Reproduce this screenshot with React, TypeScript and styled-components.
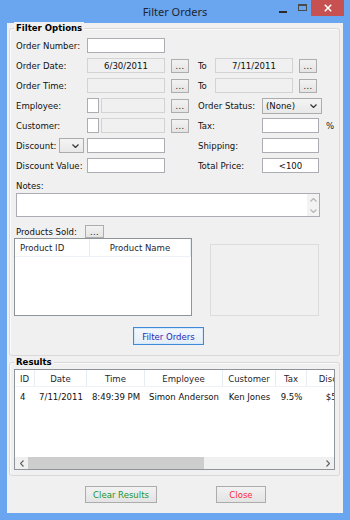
import React from 'react';
import styled, { createGlobalStyle } from 'styled-components';

const FONT = `"DejaVu Sans Condensed", "DejaVu Sans", sans-serif`;

const Global = createGlobalStyle`
  html, body { margin: 0; padding: 0; }
  body { width: 350px; height: 520px; overflow: hidden; background: #6aa6ef; }
  * { box-sizing: border-box; }
`;

const Window = styled.div`
  width: 350px;
  height: 520px;
  background: #6aa6ef;
  display: flex;
  flex-direction: column;
  font-family: ${FONT};
  font-size: 9.5px;
  color: #111;
`;

const TitleBar = styled.div`
  height: 23px;
  display: grid;
  grid-template-columns: 1fr auto 1fr;
  align-items: start;
`;

const TitleText = styled.div`
  grid-column: 2;
  font-family: "Noto Sans", sans-serif;
  font-size: 11px;
  line-height: 23px;
  color: #1e2530;
`;

const Controls = styled.div`
  grid-column: 3;
  justify-self: end;
  display: flex;
  padding-right: 6px;
`;

const CtrlButton = styled.div<{ $w: number; $bg?: string }>`
  width: ${p => p.$w}px;
  height: 16px;
  background: ${p => p.$bg ?? 'transparent'};
  display: flex;
  justify-content: center;
  align-items: flex-start;
`;

const MinGlyph = styled.div`
  width: 8px;
  height: 2px;
  margin-top: 11px;
  background: #2b2b2b;
`;

const MaxGlyph = styled.div`
  width: 9px;
  height: 7px;
  margin-top: 4px;
  border: 1px solid #4a4a4a;
  border-top-width: 2px;
`;

const Frame = styled.div`
  flex: 1;
  padding: 0 7px 7px 7px;
  display: flex;
`;

const Client = styled.div`
  flex: 1;
  background: #f0f0f0;
  padding: 5px 0 0 2px;
  display: flex;
  flex-direction: column;
`;

const GroupBox = styled.div<{ $mt: number; $pt: number; $pb: number }>`
  position: relative;
  width: 331px;
  margin-top: ${p => p.$mt}px;
  padding: ${p => p.$pt}px 0 ${p => p.$pb}px 4px;
  border: 1px solid #d9d9d9;
  border-radius: 3px;
  box-shadow: inset 1px 1px 0 #fafafa;
  display: flex;
  flex-direction: column;
`;

const GroupTitle = styled.div`
  position: absolute;
  top: -7px;
  left: 4px;
  padding: 0 2px;
  background: #f0f0f0;
  font-weight: bold;
  line-height: 12px;
  color: #000;
`;

const Rows = styled.div`
  display: flex;
  flex-direction: column;
  gap: 5px;
  margin-left: 2px;
`;

const Row = styled.div`
  display: flex;
  align-items: center;
  height: 15px;
`;

const Cell = styled.div<{ $w?: number }>`
  display: flex;
  align-items: center;
  width: ${p => (p.$w ? `${p.$w}px` : 'auto')};
`;

const Label = styled.span<{ $w: number }>`
  width: ${p => p.$w}px;
  flex: none;
  white-space: nowrap;
  line-height: 12px;
  color: #111;
`;

const TextBox = styled.div<{ $w: number; $disabled?: boolean; $center?: boolean; $ml?: number }>`
  width: ${p => p.$w}px;
  height: 15px;
  flex: none;
  margin-left: ${p => p.$ml ?? 0}px;
  border: 1px solid ${p => (p.$disabled ? '#d3d3d3' : '#abadb3')};
  background: ${p => (p.$disabled ? '#f0f0f0' : '#ffffff')};
  text-align: ${p => (p.$center ? 'center' : 'left')};
  line-height: 13px;
  padding: 0 3px;
  color: #111;
  white-space: nowrap;
  overflow: hidden;
`;

const DotsButton = styled.div<{ $h?: number; $w?: number; $ml?: number }>`
  width: ${p => p.$w ?? 18}px;
  height: ${p => p.$h ?? 14}px;
  margin-left: ${p => p.$ml ?? 6}px;
  flex: none;
  border: 1px solid #adadad;
  background: linear-gradient(#f2f2f2, #e4e4e4);
  font-size: 9px;
  line-height: 12px;
  text-align: center;
  color: #111;
  letter-spacing: 0.5px;
`;

const Combo = styled.div<{ $w: number; $h?: number; $ml?: number }>`
  width: ${p => p.$w}px;
  height: ${p => p.$h ?? 15}px;
  flex: none;
  margin-left: ${p => p.$ml ?? 0}px;
  border: 1px solid #acacac;
  background: linear-gradient(#f4f4f4, #e8e8e8);
  display: flex;
  align-items: center;
  justify-content: space-between;
  padding: 0 4px 0 3px;
  line-height: 12px;
  color: #111;
`;

const Suffix = styled.span`
  margin-left: 7px;
  color: #222;
`;

const NotesLabel = styled.div`
  margin: 7px 0 0 2px;
  height: 12px;
  line-height: 12px;
  color: #111;
`;

const NotesBox = styled.div`
  margin: 1px 0 0 2px;
  width: 304px;
  height: 24px;
  border: 1px solid #abadb3;
  background: #fff;
  display: flex;
  justify-content: flex-end;
`;

const VScroll = styled.div`
  width: 12px;
  background: #f3f3f3;
  display: flex;
  flex-direction: column;
  justify-content: space-between;
  align-items: center;
  padding: 4px 0 3px;
`;

const ProductsRow = styled(Row)`
  margin: 8px 0 0 2px;
  height: 13px;
`;

const ProductsArea = styled.div`
  display: flex;
  align-items: flex-end;
`;

const ListView = styled.div<{ $w: number; $h: number }>`
  width: ${p => p.$w}px;
  height: ${p => p.$h}px;
  flex: none;
  border: 1px solid #8f949b;
  background: #fff;
  display: flex;
  flex-direction: column;
  overflow: hidden;
`;

const HeaderRow = styled.div<{ $h: number }>`
  display: flex;
  height: ${p => p.$h}px;
  flex: none;
  border-bottom: 1px solid #eef2f7;
`;

const HeaderCell = styled.div<{ $w: number; $align?: string; $pl?: number }>`
  width: ${p => p.$w}px;
  flex: none;
  border-right: 1px solid #e6ecf3;
  padding-left: ${p => p.$pl ?? 0}px;
  display: flex;
  align-items: center;
  justify-content: ${p => (p.$align === 'left' ? 'flex-start' : 'center')};
  white-space: nowrap;
  color: #1f1f2e;
`;

const Body = styled.div`
  flex: 1;
  padding-top: 1px;
`;

const DataRow = styled.div`
  display: flex;
  height: 16px;
  align-items: center;
`;

const DataCell = styled.div<{ $w: number; $align?: string; $pl?: number }>`
  width: ${p => p.$w}px;
  flex: none;
  padding-left: ${p => p.$pl ?? 0}px;
  text-align: ${p => p.$align ?? 'center'};
  white-space: nowrap;
  color: #111;
`;

const HScroll = styled.div`
  height: 12px;
  flex: none;
  display: flex;
  align-items: stretch;
  background: #f0f0f0;
`;

const ArrowBox = styled.div`
  width: 13px;
  flex: none;
  display: flex;
  align-items: center;
  justify-content: center;
`;

const Track = styled.div`
  flex: 1;
  display: flex;
`;

const Thumb = styled.div<{ $w: number }>`
  width: ${p => p.$w}px;
  background: #cdcdcd;
`;

const PictureBox = styled.div`
  width: 109px;
  height: 72px;
  margin-left: 18px;
  border: 1px solid #dcdcdc;
  background: #f0f0f0;
`;

const PushButton = styled.div<{ $w: number; $h: number; $ml: number; $mt?: number; $color: string; $primary?: boolean }>`
  width: ${p => p.$w}px;
  height: ${p => p.$h}px;
  margin-left: ${p => p.$ml}px;
  margin-top: ${p => p.$mt ?? 0}px;
  flex: none;
  border: 1px solid ${p => (p.$primary ? '#3c8ad8' : '#acacac')};
  box-shadow: ${p => (p.$primary ? 'inset 0 0 0 1px #d6e8fb' : 'none')};
  background: ${p => (p.$primary ? 'linear-gradient(#f4f8fc, #e4edf7)' : 'linear-gradient(#f2f2f2, #e3e3e3)')};
  color: ${p => p.$color};
  display: flex;
  align-items: center;
  justify-content: center;
  white-space: nowrap;
`;

const ButtonBar = styled.div`
  display: flex;
  margin-top: 10px;
`;

const Chevron = ({ dir = 'down', color = '#333' }: { dir?: 'down' | 'up' | 'left' | 'right'; color?: string }) => {
  const d =
    dir === 'down' ? 'M0.5 0.5 L3.5 3.5 L6.5 0.5' :
    dir === 'up' ? 'M0.5 3.5 L3.5 0.5 L6.5 3.5' :
    dir === 'left' ? 'M3.5 0.5 L0.5 3.5 L3.5 6.5' : 'M0.5 0.5 L3.5 3.5 L0.5 6.5';
  const vert = dir === 'down' || dir === 'up';
  return (
    <svg width={vert ? 7 : 4} height={vert ? 4 : 7} viewBox={vert ? '0 0 7 4' : '0 0 4 7'}>
      <path d={d} fill="none" stroke={color} strokeWidth="1.2" />
    </svg>
  );
};

const resultCols = [
  { t: 'ID', w: 20, a: 'left', pl: 5 },
  { t: 'Date', w: 52 },
  { t: 'Time', w: 58 },
  { t: 'Employee', w: 78 },
  { t: 'Customer', w: 53 },
  { t: 'Tax', w: 31 },
  { t: 'Discount', w: 62 },
];

const resultRow = ['4', '7/11/2011', '8:49:39 PM', 'Simon Anderson', 'Ken Jones', '9.5%', '$5.00'];

export default function App() {
  return (
    <>
      <Global />
      <Window>
        <TitleBar>
          <TitleText>Filter Orders</TitleText>
          <Controls>
            <CtrlButton $w={20}><MinGlyph /></CtrlButton>
            <CtrlButton $w={18}><MaxGlyph /></CtrlButton>
            <CtrlButton $w={33} $bg="#c75050">
              <svg width="8" height="8" viewBox="0 0 8 8" style={{ marginTop: 4 }}>
                <path d="M0.8 0.8 L7.2 7.2 M7.2 0.8 L0.8 7.2" stroke="#fff" strokeWidth="1.6" />
              </svg>
            </CtrlButton>
          </Controls>
        </TitleBar>
        <Frame>
          <Client>
            <GroupBox $mt={0} $pt={9} $pb={10}>
              <GroupTitle>Filter Options</GroupTitle>
              <Rows>
                <Row>
                  <Cell $w={182}>
                    <Label $w={71}>Order Number:</Label>
                    <TextBox $w={78} />
                  </Cell>
                </Row>
                <Row>
                  <Cell $w={182}>
                    <Label $w={71}>Order Date:</Label>
                    <TextBox $w={78} $disabled $center>6/30/2011</TextBox>
                    <DotsButton>...</DotsButton>
                  </Cell>
                  <Cell>
                    <Label $w={17}>To</Label>
                    <TextBox $w={78} $disabled $center>7/11/2011</TextBox>
                    <DotsButton>...</DotsButton>
                  </Cell>
                </Row>
                <Row>
                  <Cell $w={182}>
                    <Label $w={71}>Order Time:</Label>
                    <TextBox $w={78} $disabled />
                    <DotsButton>...</DotsButton>
                  </Cell>
                  <Cell>
                    <Label $w={17}>To</Label>
                    <TextBox $w={78} $disabled />
                    <DotsButton>...</DotsButton>
                  </Cell>
                </Row>
                <Row>
                  <Cell $w={182}>
                    <Label $w={71}>Employee:</Label>
                    <TextBox $w={12} />
                    <TextBox $w={64} $disabled $ml={2} />
                    <DotsButton>...</DotsButton>
                  </Cell>
                  <Cell>
                    <Label $w={64}>Order Status:</Label>
                    <Combo $w={60} $h={16}>
                      <span>(None)</span>
                      <Chevron />
                    </Combo>
                  </Cell>
                </Row>
                <Row>
                  <Cell $w={182}>
                    <Label $w={71}>Customer:</Label>
                    <TextBox $w={12} />
                    <TextBox $w={64} $disabled $ml={2} />
                    <DotsButton>...</DotsButton>
                  </Cell>
                  <Cell>
                    <Label $w={64}>Tax:</Label>
                    <TextBox $w={57} />
                    <Suffix>%</Suffix>
                  </Cell>
                </Row>
                <Row>
                  <Cell $w={182}>
                    <Label $w={43}>Discount:</Label>
                    <Combo $w={25}>
                      <span />
                      <Chevron />
                    </Combo>
                    <TextBox $w={78} $ml={3} />
                  </Cell>
                  <Cell>
                    <Label $w={64}>Shipping:</Label>
                    <TextBox $w={57} />
                  </Cell>
                </Row>
                <Row>
                  <Cell $w={182}>
                    <Label $w={71}>Discount Value:</Label>
                    <TextBox $w={78} />
                  </Cell>
                  <Cell>
                    <Label $w={64}>Total Price:</Label>
                    <TextBox $w={57} $center>&lt;100</TextBox>
                  </Cell>
                </Row>
              </Rows>
              <NotesLabel>Notes:</NotesLabel>
              <NotesBox>
                <VScroll>
                  <Chevron dir="up" color="#b5b5b5" />
                  <Chevron dir="down" color="#b5b5b5" />
                </VScroll>
              </NotesBox>
              <ProductsRow>
                <Label $w={69}>Products Sold:</Label>
                <DotsButton $w={19} $h={13} $ml={0}>...</DotsButton>
              </ProductsRow>
              <ProductsArea>
                <ListView $w={178} $h={78}>
                  <HeaderRow $h={18}>
                    <HeaderCell $w={75} $align="left" $pl={5}>Product ID</HeaderCell>
                    <HeaderCell $w={101}>Product Name</HeaderCell>
                  </HeaderRow>
                </ListView>
                <PictureBox />
              </ProductsArea>
              <PushButton $w={71} $h={18} $ml={119} $mt={11} $color="#2a2ab8" $primary>
                Filter Orders
              </PushButton>
            </GroupBox>
            <GroupBox $mt={6} $pt={6} $pb={5}>
              <GroupTitle>Results</GroupTitle>
              <ListView $w={321} $h={101}>
                <HeaderRow $h={17}>
                  {resultCols.map(c => (
                    <HeaderCell key={c.t} $w={c.w} $align={c.a} $pl={c.pl}>{c.t}</HeaderCell>
                  ))}
                </HeaderRow>
                <Body>
                  <DataRow>
                    {resultCols.map((c, i) => (
                      <DataCell key={c.t} $w={c.w} $align={c.a} $pl={c.pl}>{resultRow[i]}</DataCell>
                    ))}
                  </DataRow>
                </Body>
                <HScroll>
                  <ArrowBox><Chevron dir="left" color="#606060" /></ArrowBox>
                  <Track><Thumb $w={176} /></Track>
                  <ArrowBox><Chevron dir="right" color="#606060" /></ArrowBox>
                </HScroll>
              </ListView>
            </GroupBox>
            <ButtonBar>
              <PushButton $w={72} $h={17} $ml={76} $color="#22962f">Clear Results</PushButton>
              <PushButton $w={50} $h={17} $ml={59} $color="#ff2a36">Close</PushButton>
            </ButtonBar>
          </Client>
        </Frame>
      </Window>
    </>
  );
}
